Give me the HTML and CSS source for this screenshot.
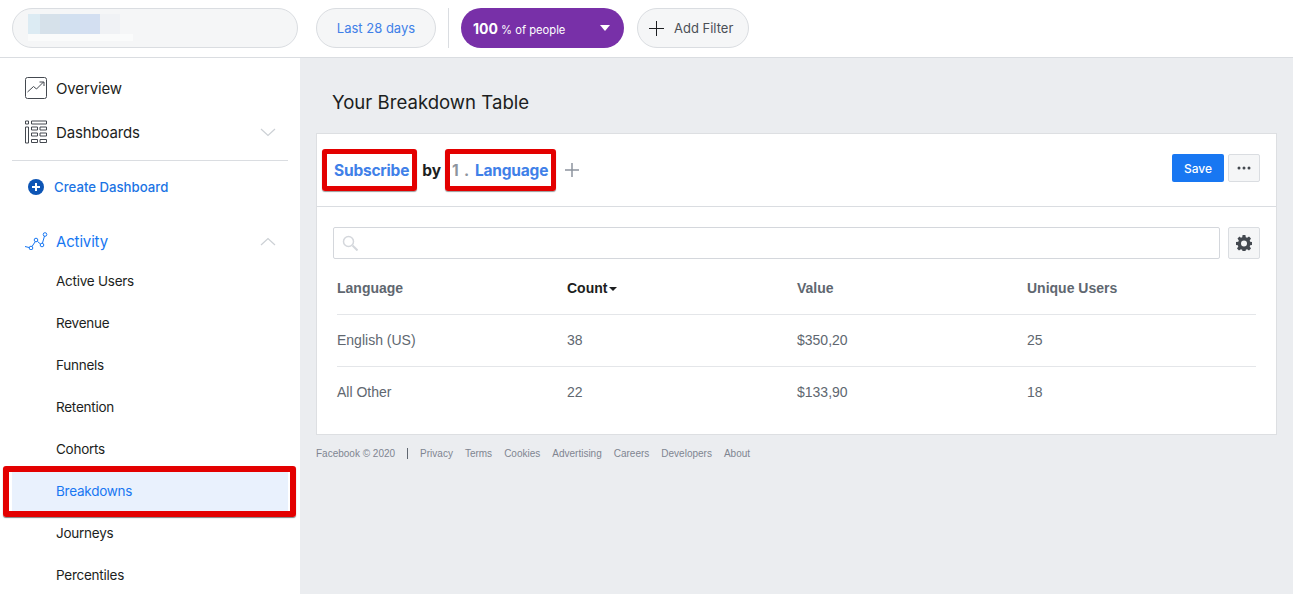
FILE: index.html
```html
<!DOCTYPE html>
<html lang="en">

<head>
    <meta charset="UTF-8">
    <title>Breakdowns</title>
    <link rel="stylesheet" href="styles.css">
</head>

<body>
    <header class="topbar">
        <div class="app-picker">
            <span class="blur b1"></span><span class="blur b2"></span><span class="blur b3"></span><span class="blur b4"></span><span class="blur b5"></span>
        </div>
        <button class="pill date-pill">Last 28 days</button>
        <span class="top-sep"></span>
        <button class="people-pill">
            <span><b>100</b> % of people</span>
            <span class="people-caret"></span>
        </button>
        <button class="pill filter-pill">
            <svg width="15" height="15" viewBox="0 0 15 15"><path d="M7.500 0v15M0 7.500h15" stroke="#1c1e21" stroke-width="1" fill="none"/></svg>
            Add Filter
        </button>
    </header>

    <div class="layout">
        <nav class="sidebar">
            <a class="nav-main nav-first">
                <svg class="nav-icon" width="24" height="24" viewBox="0 0 24 24" fill="none" stroke="#444950">
                    <rect x="1.500" y="1.500" width="21" height="21" rx="2"/>
                    <path d="M3.500 16l6-5.500 3 2.500 7-7M15.500 6h4.500v4"/>
                </svg>
                Overview
            </a>
            <a class="nav-main">
                <svg class="nav-icon" width="24" height="24" viewBox="0 0 24 24" fill="none" stroke="#444950">
                    <path d="M1.500 1h3v3h-3zM1.500 7h3v16h-3zM7.500 1h15v3h-15zM7.500 7h6v3h-6zM16 7h6.500v3H16zM7.500 13h6v3h-6zM16 13h6.500v3H16zM7.500 19.500h6v3h-6zM16 19.500h6.500v3H16z"/>
                </svg>
                Dashboards
                <svg class="chev" width="16" height="9" viewBox="0 0 16 9"><path d="M1 1l7 6.500L15 1" fill="none" stroke="#ccd0d5" stroke-width="1.200"/></svg>
            </a>
            <div class="nav-rule"></div>
            <a class="create-link">
                <svg width="16" height="16" viewBox="0 0 16 16"><circle cx="8" cy="8" r="8" fill="#0d55b5"/><path d="M8 4v8M4 8h8" stroke="#fff" stroke-width="2"/></svg>
                Create Dashboard
            </a>
            <a class="nav-main nav-active">
                <svg class="nav-icon" width="24" height="18" viewBox="0 0 24 18" fill="none" stroke="#1877f2">
                    <path d="M1 14.500l4 1M8 14.500l3-4.500M13.500 9.500l3 2.500M18.500 11l2-7"/>
                    <circle cx="7" cy="16" r="1.800"/><circle cx="12" cy="8" r="1.800"/><circle cx="18" cy="13" r="1.800"/><circle cx="21" cy="2.500" r="1.800"/>
                </svg>
                Activity
                <svg class="chev" width="16" height="9" viewBox="0 0 16 9"><path d="M1 8l7-6.500L15 8" fill="none" stroke="#ccd0d5" stroke-width="1.200"/></svg>
            </a>
            <a class="nav-sub">Active Users</a>
            <a class="nav-sub">Revenue</a>
            <a class="nav-sub">Funnels</a>
            <a class="nav-sub">Retention</a>
            <a class="nav-sub">Cohorts</a>
            <a class="nav-sub nav-sub-active">Breakdowns<span class="mark-sidebar"></span></a>
            <a class="nav-sub">Journeys</a>
            <a class="nav-sub">Percentiles</a>
        </nav>

        <main class="content">
            <h1 class="page-title">Your Breakdown Table</h1>
            <section class="card">
                <div class="card-head">
                    <span class="marked">Subscribe</span>
                    <span class="by">by</span>
                    <span class="marked marked-lang"><span class="num">1 .</span> Language</span>
                    <svg class="add-dim" width="14" height="14" viewBox="0 0 14 14"><path d="M7 0v14M0 7h14" stroke="#8d949e" stroke-width="1.500"/></svg>
                    <div class="head-actions">
                        <button class="save-btn">Save</button>
                        <button class="square-btn">
                            <svg width="14" height="4" viewBox="0 0 14 4"><circle cx="2" cy="2" r="1.500" fill="#444950"/><circle cx="7" cy="2" r="1.500" fill="#444950"/><circle cx="12" cy="2" r="1.500" fill="#444950"/></svg>
                        </button>
                    </div>
                </div>
                <div class="card-body">
                    <div class="search-row">
                        <div class="search-box">
                            <svg width="16" height="16" viewBox="0 0 16 16" fill="none" stroke="#d4d7dc" stroke-width="1.500"><circle cx="6.500" cy="6.500" r="5"/><path d="M10.500 10.500l5 5" stroke-width="2"/></svg>
                        </div>
                        <button class="square-btn">
                            <svg width="16" height="16" viewBox="0 0 16 16">
                                <path fill="#444950" fill-rule="evenodd" d="M6.600 0h2.800l.4 2.200 1.300.6L13 1.500l2 2-1.300 1.900.5 1.300 2.300.4v2.800l-2.300.4-.5 1.300 1.300 1.900-2 2-1.900-1.300-1.300.5-.4 2.300H6.600l-.4-2.300-1.300-.5L3 15.500l-2-2 1.300-1.900-.5-1.300L0 9.900V7.100l2.300-.4.5-1.300L1.500 3.500l2-2 1.400 1.300 1.300-.6zM8 5.500a3 3 0 1 0 0 6 3 3 0 0 0 0-6z"/>
                            </svg>
                        </button>
                    </div>
                    <table class="data-table">
                        <thead>
                            <tr>
                                <th>Language</th>
                                <th class="sorted">Count<span class="sort-caret"></span></th>
                                <th>Value</th>
                                <th>Unique Users</th>
                            </tr>
                        </thead>
                        <tbody>
                            <tr>
                                <td>English (US)</td>
                                <td>38</td>
                                <td>$350,20</td>
                                <td>25</td>
                            </tr>
                            <tr>
                                <td>All Other</td>
                                <td>22</td>
                                <td>$133,90</td>
                                <td>18</td>
                            </tr>
                        </tbody>
                    </table>
                </div>
            </section>
            <footer class="foot">
                <span class="foot-copy">Facebook © 2020</span>
                <a>Privacy</a><a>Terms</a><a>Cookies</a><a>Advertising</a><a>Careers</a><a>Developers</a><a>About</a>
            </footer>
        </main>
    </div>
</body>

</html>
```

FILE: styles.css
```css
* {
    box-sizing: border-box;
}

html,
body {
    height: 594px;
    margin: 0;
    overflow: hidden;
}

body {
    background: #fff;
    color: #1c1e21;
    font-family: Inter, 'Liberation Sans', sans-serif;
}

button {
    font-family: inherit;
    cursor: pointer;
}

.topbar {
    height: 58px;
    display: flex;
    align-items: center;
    padding: 0 12px 1px;
    border-bottom: 1px solid #dadde1;
}

.app-picker {
    width: 286px;
    height: 40px;
    display: flex;
    padding: 5px 0 0 15px;
    background: linear-gradient(#fafbfb, #fafbfb) no-repeat 15px 25px / 105px 7px, #f5f6f7;
    border: 1px solid #dadde1;
    border-radius: 20px;
}

.blur {
    height: 20px;
}

.b1 {
    width: 12px;
    background: #dcebf3;
}

.b2 {
    width: 20px;
    background: #d6e1ea;
}

.b3 {
    width: 20px;
    background: #d2e0f0;
}

.b4 {
    width: 20px;
    background: #d3dff1;
}

.b5 {
    width: 20px;
    background: #f0f2f5;
}

.pill {
    height: 40px;
    background: #f5f6f7;
    border: 1px solid #dadde1;
    border-radius: 20px;
    font-size: 13px;
}

.date-pill {
    width: 120px;
    margin-left: 18px;
    padding: 0;
    color: #4080e8;
}

.top-sep {
    width: 1px;
    height: 40px;
    margin: 0 12px;
    background: #dadde1;
}

.people-pill {
    width: 163px;
    height: 40px;
    display: flex;
    align-items: center;
    justify-content: space-between;
    padding: 0 14px 0 12px;
    background: #7830a8;
    border: none;
    border-radius: 20px;
    color: #fff;
    font-size: 11.200px;
}

.people-pill b {
    font-size: 14px;
}

.people-caret {
    width: 0;
    height: 0;
    border-left: 5.500px solid transparent;
    border-right: 5.500px solid transparent;
    border-top: 6px solid #fff;
}

.filter-pill {
    width: 112px;
    margin-left: 13px;
    display: flex;
    align-items: center;
    gap: 10px;
    padding: 0 0 0 11px;
    color: #4b4f56;
}

.layout {
    display: flex;
    height: 536px;
}

.sidebar {
    width: 300px;
    flex: none;
    padding: 8px 12px 0;
    background: #fff;
}

.nav-main {
    height: 44px;
    display: flex;
    align-items: center;
    padding-left: 12px;
    font-size: 15px;
    letter-spacing: -0.150px;
}

.nav-icon {
    flex: none;
    margin-right: 8px;
}

.chev {
    margin-left: auto;
    margin-right: 12px;
}

.nav-rule {
    height: 1px;
    margin-top: 6px;
    background: #dadde1;
}

.create-link {
    height: 52px;
    display: flex;
    align-items: center;
    gap: 10px;
    padding-left: 16px;
    color: #1b74e4;
    font-size: 13.200px;
    font-weight: 500;
}

.nav-active {
    height: 38px;
    margin-top: 9px;
    color: #1877f2;
}

.nav-sub {
    position: relative;
    height: 42px;
    display: flex;
    align-items: center;
    padding-left: 44px;
    font-size: 13.500px;
    letter-spacing: -0.250px;
}

.nav-sub-active {
    background: #e9f1fd;
    color: #1877f2;
}

.mark-sidebar {
    position: absolute;
    top: -4px;
    right: -8px;
    bottom: -5px;
    left: -9px;
    border: 6px solid #e30000;
    border-radius: 3px;
    box-shadow: 0 1px 1px rgba(0, 0, 0, 0.5);
}

.content {
    flex: 1;
    padding: 0 16px;
    background: #ebedf0;
}

.page-title {
    height: 75px;
    margin: 0;
    padding: 32px 0 0 16px;
    font-size: 18.600px;
    font-weight: 400;
    line-height: 24px;
}

.card {
    background: #fff;
    border: 1px solid #dddfe2;
}

.card-head {
    height: 73px;
    display: flex;
    align-items: center;
    padding: 0 16px 0 5px;
    border-bottom: 1px solid #dadde1;
    font-size: 15.500px;
    font-weight: 700;
}

.marked {
    height: 42px;
    display: flex;
    align-items: center;
    gap: 6px;
    padding: 0 3px 0 7px;
    border: 5px solid #e30000;
    border-radius: 3px;
    box-shadow: 0 1px 1px rgba(0, 0, 0, 0.4);
    color: #4080e8;
    letter-spacing: -0.200px;
}

.marked-lang {
    padding-left: 2px;
}

.num {
    color: #8d949e;
    word-spacing: 2px;
}

.by {
    margin: 0 4px 0 5px;
}

.add-dim {
    margin-left: 9px;
}

.head-actions {
    display: flex;
    gap: 4px;
    margin: 0 0 4px auto;
}

.save-btn {
    width: 52px;
    height: 28px;
    padding: 0;
    background: #1877f2;
    border: none;
    border-radius: 2px;
    color: #fff;
    font-size: 12px;
    font-weight: 500;
}

.square-btn {
    width: 32px;
    height: 28px;
    display: flex;
    align-items: center;
    justify-content: center;
    flex: none;
    padding: 0;
    background: #f5f6f7;
    border: 1px solid #dadde1;
    border-radius: 2px;
}

.card-body {
    padding: 20px 16px 16px;
}

.search-row {
    display: flex;
    gap: 8px;
}

.search-row .square-btn {
    height: 32px;
}

.search-box {
    flex: 1;
    height: 32px;
    display: flex;
    align-items: center;
    padding-left: 8px;
    background: #fff;
    border: 1px solid #d4d7dc;
    border-radius: 2px;
}

.data-table {
    width: 919px;
    margin: 3px 0 0 4px;
    border-collapse: collapse;
    table-layout: fixed;
    font-family: 'Liberation Sans', Arial, sans-serif;
    font-size: 14px;
}

.data-table th,
.data-table td {
    padding: 0;
    text-align: left;
}

.data-table th {
    height: 52px;
    color: #606770;
    font-weight: 700;
}

.data-table th.sorted {
    color: #1c1e21;
}

.data-table td {
    height: 52px;
    border-top: 1px solid #e4e6e9;
    color: #606770;
}

.data-table th:nth-child(1),
.data-table th:nth-child(2),
.data-table th:nth-child(3) {
    width: 230px;
}

.sort-caret {
    display: inline-block;
    margin-left: 2px;
    vertical-align: middle;
    border-left: 4px solid transparent;
    border-right: 4px solid transparent;
    border-top: 4px solid #1c1e21;
}

.foot {
    display: flex;
    align-items: center;
    gap: 12px;
    margin-top: 13px;
    color: #7f8590;
    font-family: 'Liberation Sans', Arial, sans-serif;
    font-size: 10px;
}

.foot-copy {
    padding-right: 12px;
    border-right: 1px solid #606770;
}
```
